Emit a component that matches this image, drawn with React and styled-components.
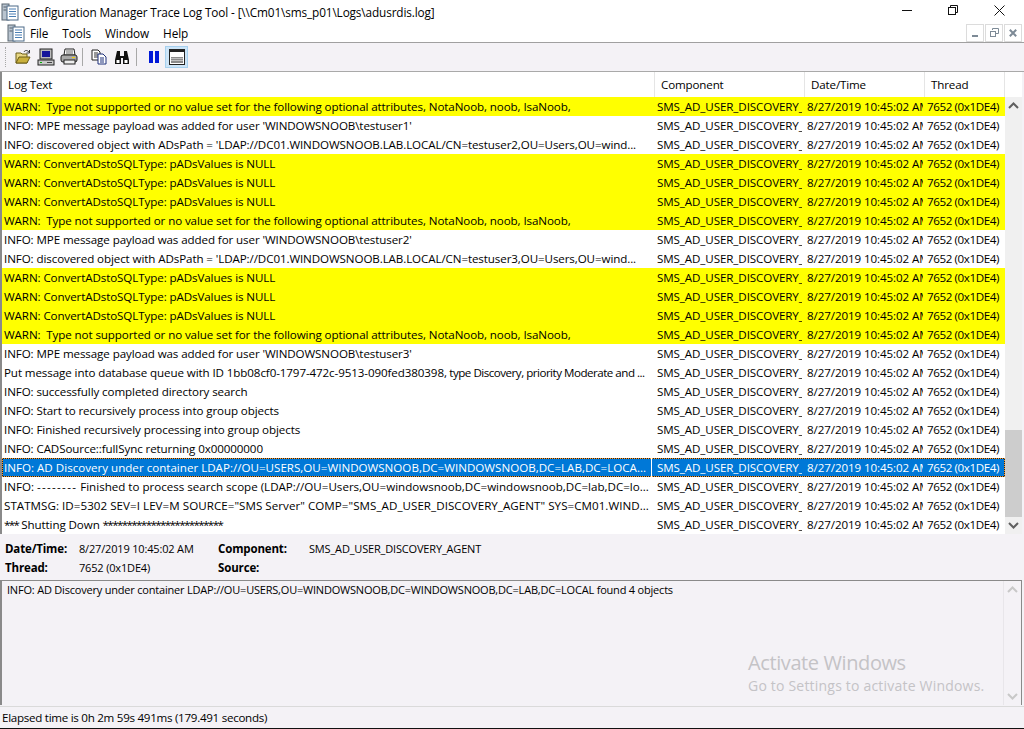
import React from "react";
import styled, { createGlobalStyle } from "styled-components";

const GlobalStyle = createGlobalStyle`
	html, body {
		margin: 0;
		padding: 0;
		background: #f4f2f6;
	}
	body {
		font-family: "Open Sans", "Noto Sans", "Liberation Sans", sans-serif;
		font-size: 11.6px;
		color: #000;
	}
`;

const Window = styled.div`
	width: 1024px;
	height: 729px;
	display: flex;
	flex-direction: column;
	overflow: hidden;
	background: #f4f2f6;
	border-bottom: 1px solid #111;
	box-sizing: border-box;
`;

const TitleBar = styled.div`
	height: 23px;
	display: flex;
	align-items: center;
	padding: 0 2px 0 1px;
	background: #fff;
	flex: none;
`;

const Title = styled.div`
	flex: 1;
	margin-left: 4px;
	font-size: 11.8px;
	letter-spacing: -0.13px;
	white-space: nowrap;
`;

const Caption = styled.div`
	width: 46px;
	height: 20px;
	align-self: flex-start;
	display: flex;
	align-items: center;
	justify-content: center;
`;

const MenuBar = styled.div`
	height: 19px;
	display: flex;
	align-items: center;
	padding-left: 7px;
	background: #fff;
	flex: none;
`;

const MenuItem = styled.span`
	margin-left: ${(p) => p.$gap}px;
	font-size: 11.8px;
	letter-spacing: -0.1px;
`;

const MdiButtons = styled.div`
	margin-left: auto;
	margin-right: 2px;
	display: flex;
	gap: 1px;
`;

const MdiButton = styled.div`
	width: 16px;
	height: 16px;
	border: 1px solid #dcdcdc;
	display: flex;
	align-items: center;
	justify-content: center;
`;

const ToolBar = styled.div`
	height: 28px;
	display: flex;
	align-items: center;
	padding-left: 5px;
	background: #f4f2f6;
	border-top: 1px solid #a0a0a0;
	border-bottom: 1px solid #a9a9a9;
	flex: none;
`;

const Grip = styled.div`
	width: 1px;
	height: 20px;
	margin-right: 4px;
	border-left: 1px dotted #a8a8a8;
`;

const ToolButton = styled.div`
	width: 23px;
	height: 22px;
	display: flex;
	align-items: center;
	justify-content: center;
	box-sizing: border-box;
	background: ${(p) => (p.$active ? "#cce4f7" : "transparent")};
	border: 1px solid ${(p) => (p.$active ? "#a6d0ee" : "transparent")};
`;

const ToolSep = styled.div`
	width: 1px;
	height: 18px;
	margin: 0 ${(p) => p.$after}px 0 ${(p) => p.$before}px;
	background: #a8a8a8;
`;

const ListArea = styled.div`
	height: 462px;
	display: flex;
	flex-direction: column;
	margin-right: 2px;
	border-left: 2px solid #8a8a8a;
	flex: none;
	background: #fff;
`;

const HeaderRow = styled.div`
	height: 25px;
	display: grid;
	grid-template-columns: 653px 150px 120px 80px 1fr;
	background: #fff;
	flex: none;
`;

const HeaderCell = styled.div`
	display: flex;
	align-items: center;
	padding-left: 6px;
	border-right: 1px solid #e5e5e5;
	letter-spacing: -0.15px;
	white-space: nowrap;
`;

const ListBody = styled.div`
	flex: 1;
	display: flex;
	min-height: 0;
`;

const Rows = styled.div`
	width: 1003px;
	display: flex;
	flex-direction: column;
`;

const Row = styled.div`
	height: 19px;
	display: grid;
	grid-template-columns: 653px 150px 120px 80px;
	align-items: center;
	box-sizing: border-box;
	background: ${(p) =>
		p.$kind === "warn" ? "#ffff00" : p.$kind === "selected" ? "#0078d7" : "#fff"};
	color: ${(p) => (p.$kind === "selected" ? "#fff" : "#000")};
	outline: ${(p) => (p.$kind === "selected" ? "1px dotted #ff9a1f" : "none")};
	outline-offset: -1px;
	box-shadow: ${(p) => (p.$kind === "selected" ? "inset 0 0 0 1px #10233a" : "none")};
`;

const Cell = styled.div`
	padding-left: 2px;
	margin-right: ${(p) => p.$clip}px;
	overflow: hidden;
	white-space: pre;
	letter-spacing: ${(p) => p.$spacing || -0.1}px;
	line-height: 19px;
	height: 19px;
	box-sizing: border-box;
	border-right: ${(p) => (p.$divider ? "1px solid #fff" : "none")};
`;

const Dashes = styled.span`
	letter-spacing: 1.3px;
`;

const Stars = styled.span`
	letter-spacing: -1.6px;
`;

const Squeezed = styled.span`
	letter-spacing: -0.5px;
`;

const Scrollbar = styled.div`
	width: 17px;
	display: flex;
	flex-direction: column;
	background: #f0f0f0;
`;

const ScrollArrow = styled.div`
	height: 17px;
	display: flex;
	align-items: center;
	justify-content: center;
	flex: none;
`;

const ScrollTrack = styled.div`
	flex: 1;
	display: flex;
	flex-direction: column;
	padding-top: ${(p) => p.$top}px;
`;

const ScrollThumb = styled.div`
	height: 87px;
	background: #cdcdcd;
`;

const Details = styled.div`
	height: 46px;
	flex: none;
	display: grid;
	grid-template-columns: 74px 139px 91px 1fr;
	grid-template-rows: 19px 19px;
	align-content: center;
	align-items: center;
	padding: 2px 0 0 5px;
	box-sizing: border-box;
	background: #f4f2f6;
`;

const DetailLabel = styled.div`
	font-weight: 700;
	font-size: 11.5px;
	letter-spacing: -0.15px;
`;

const DetailValue = styled.div`
	font-size: 11px;
	letter-spacing: -0.17px;
	white-space: nowrap;
`;

const MessagePane = styled.div`
	height: 125px;
	flex: none;
	display: flex;
	justify-content: space-between;
	margin-right: 2px;
	border-left: 2px solid #8a8a8a;
	border-top: 1px solid #8a8a8a;
	border-right: 1px solid #8a8a8a;
	box-sizing: border-box;
`;

const MessageText = styled.div`
	padding: 1px 0 0 5px;
	font-size: 11px;
	letter-spacing: -0.2px;
`;

const ActivateMark = styled.div`
	position: absolute;
	left: 748px;
	top: 650px;
	color: #c4c3c6;
	pointer-events: none;
`;

const ActivateTitle = styled.div`
	font-size: 20px;
	line-height: 26px;
	letter-spacing: -0.4px;
`;

const ActivateHint = styled.div`
	font-size: 14px;
	line-height: 19px;
	letter-spacing: 0.2px;
`;

const PaneScroll = styled.div`
	width: 17px;
	display: flex;
	flex-direction: column;
	justify-content: space-between;
	border-left: 1px solid #e8e6ea;
`;

const StatusBar = styled.div`
	flex: 1;
	display: flex;
	align-items: center;
	padding-left: 2px;
	margin-top: 1px;
	border-top: 1px solid #dadada;
	letter-spacing: -0.28px;
`;

const Chevron = ({ up, color = "#606060" }) => (
	<svg width="11" height="7" viewBox="0 0 11 7">
		<path
			d={up ? "M1 6 L5.5 1.5 L10 6" : "M1 1 L5.5 5.5 L10 1"}
			fill="none"
			stroke={color}
			strokeWidth="2"
		/>
	</svg>
);

const AppIcon = () => (
	<svg width="18" height="18" viewBox="0 0 18 18">
		<rect x="1" y="1" width="7" height="16" fill="#b9c4cf" stroke="#5a6672" />
		<rect x="6" y="3" width="11" height="14" fill="#fff" stroke="#4d6a88" />
		<path d="M8 6h7M8 8.5h7M8 11h7M8 13.5h7" stroke="#4a7fb5" />
		<path d="M2.5 4h3M2.5 7h3" stroke="#56616c" />
	</svg>
);

const OpenIcon = () => (
	<svg width="16" height="16" viewBox="0 0 16 16">
		<path d="M1 4h5l1 1h5v9H1z" fill="#e8d785" stroke="#6b5c17" />
		<path d="M1 14l3-6h11l-3 6z" fill="#c9b03d" stroke="#6b5c17" />
		<path d="M9 3c1-2 3-2 5 0" fill="none" stroke="#333" />
		<path d="M14.5 1v3h-3" fill="none" stroke="#333" />
	</svg>
);

const ComputerIcon = () => (
	<svg width="18" height="18" viewBox="0 0 18 18">
		<rect x="3" y="1" width="12" height="10" fill="#bbb" stroke="#222" />
		<rect x="5" y="3" width="8" height="6" fill="#16169a" />
		<rect x="1" y="12" width="16" height="5" fill="#c8c8c8" stroke="#222" />
		<rect x="3" y="14" width="2" height="1" fill="#00b000" />
		<path d="M10 14.5h5" stroke="#444" />
	</svg>
);

const PrintIcon = () => (
	<svg width="18" height="18" viewBox="0 0 18 18">
		<path d="M5 1h9l1 6H4z" fill="#fff" stroke="#222" />
		<path d="M6 3h7M6 5h7" stroke="#666" />
		<rect x="1" y="7" width="16" height="7" rx="2" fill="#a9a9a9" stroke="#222" />
		<rect x="4" y="12" width="11" height="4" fill="#eee" stroke="#222" />
		<rect x="12" y="9" width="3" height="1" fill="#f0d000" />
	</svg>
);

const CopyIcon = () => (
	<svg width="16" height="16" viewBox="0 0 16 16">
		<path d="M1 1h6l2 2v8H1z" fill="#fff" stroke="#222" />
		<path d="M3 4h4M3 6h4M3 8h4" stroke="#333" />
		<path d="M7 5h5l3 3v7H7z" fill="#fff" stroke="#1c2f7a" />
		<path d="M9 9h4M9 11h4M9 13h4" stroke="#1c2f7a" />
	</svg>
);

const FindIcon = () => (
	<svg width="16" height="16" viewBox="0 0 16 16">
		<path d="M3 2h3v5h4V2h3l2 9v4H9V9H7v6H1v-4z" fill="#111" />
		<rect x="2.5" y="11" width="3" height="3" fill="#fff" />
		<rect x="10.5" y="11" width="3" height="3" fill="#fff" />
	</svg>
);

const PauseIcon = () => (
	<svg width="12" height="14" viewBox="0 0 12 14">
		<rect x="1" y="1" width="4" height="12" fill="#0018d8" />
		<rect x="7" y="1" width="4" height="12" fill="#0018d8" />
	</svg>
);

const PaneIcon = () => (
	<svg width="16" height="16" viewBox="0 0 16 16">
		<rect x="0.5" y="0.5" width="15" height="15" fill="#fff" stroke="#222" />
		<rect x="1" y="1" width="14" height="2" fill="#222" />
		<rect x="2" y="8" width="12" height="6" fill="#8b8b8b" />
		<path d="M2 9.5h12M2 11.5h12" stroke="#c0c0c0" />
	</svg>
);

const warnType = "WARN:  Type not supported or no value set for the following optional attributes, NotaNoob, noob, IsaNoob,";
const warnNull = "WARN: ConvertADstoSQLType: pADsValues is NULL";

const rows = [
	{ text: warnType, kind: "warn" },
	{ text: "INFO: MPE message payload was added for user 'WINDOWSNOOB\\testuser1'" },
	{ text: "INFO: discovered object with ADsPath = 'LDAP://DC01.WINDOWSNOOB.LAB.LOCAL/CN=testuser2,OU=Users,OU=wind..." },
	{ text: warnNull, kind: "warn" },
	{ text: warnNull, kind: "warn" },
	{ text: warnNull, kind: "warn" },
	{ text: warnType, kind: "warn" },
	{ text: "INFO: MPE message payload was added for user 'WINDOWSNOOB\\testuser2'" },
	{ text: "INFO: discovered object with ADsPath = 'LDAP://DC01.WINDOWSNOOB.LAB.LOCAL/CN=testuser3,OU=Users,OU=wind..." },
	{ text: warnNull, kind: "warn" },
	{ text: warnNull, kind: "warn" },
	{ text: warnNull, kind: "warn" },
	{ text: warnType, kind: "warn" },
	{ text: "INFO: MPE message payload was added for user 'WINDOWSNOOB\\testuser3'" },
	{
		text: (
			<>
				Put message into database queue with ID 1bb08cf0-1797-472c-9513-090fed380398,
				<Squeezed> type Discovery, priority Moderate and ...</Squeezed>
			</>
		),
	},
	{ text: "INFO: successfully completed directory search" },
	{ text: "INFO: Start to recursively process into group objects" },
	{ text: "INFO: Finished recursively processing into group objects" },
	{ text: "INFO: CADSource::fullSync returning 0x00000000" },
	{ text: "INFO: AD Discovery under container LDAP://OU=USERS,OU=WINDOWSNOOB,DC=WINDOWSNOOB,DC=LAB,DC=LOCA...", kind: "selected", spacing: 0.001 },
	{
		text: (
			<>
				INFO: <Dashes>--------</Dashes> Finished to process search scope (LDAP://OU=Users,OU=windowsnoob,DC=windowsnoob,DC=lab,DC=lo...
			</>
		),
		spacing: -0.01,
	},
	{ text: "STATMSG: ID=5302 SEV=I LEV=M SOURCE=\"SMS Server\" COMP=\"SMS_AD_USER_DISCOVERY_AGENT\" SYS=CM01.WIND...", spacing: 0.04 },
	{
		text: (
			<>
				<Stars>***</Stars> Shutting Down <Stars>*************************</Stars>
			</>
		),
	},
];

const App = () => (
	<>
		<GlobalStyle />
		<Window>
			<TitleBar>
				<AppIcon />
				<Title>Configuration Manager Trace Log Tool - [\\Cm01\sms_p01\Logs\adusrdis.log]</Title>
				<Caption>
					<svg width="10" height="10" viewBox="0 0 10 10">
						<path d="M0 5.5h10" stroke="#111" />
					</svg>
				</Caption>
				<Caption>
					<svg width="10" height="10" viewBox="0 0 10 10">
						<rect x="0.5" y="2.5" width="7" height="7" fill="none" stroke="#111" />
						<path d="M2.5 2.5V0.5h7v7H7.5" fill="none" stroke="#111" />
					</svg>
				</Caption>
				<Caption>
					<svg width="11" height="11" viewBox="0 0 11 11">
						<path d="M0.5 0.5l10 10M10.5 0.5l-10 10" stroke="#111" />
					</svg>
				</Caption>
			</TitleBar>
			<MenuBar>
				<AppIcon />
				<MenuItem $gap={5}>File</MenuItem>
				<MenuItem $gap={14}>Tools</MenuItem>
				<MenuItem $gap={14}>Window</MenuItem>
				<MenuItem $gap={14}>Help</MenuItem>
				<MdiButtons>
					<MdiButton>
						<svg width="8" height="8" viewBox="0 0 8 8">
							<rect x="1" y="6" width="6" height="2" fill="#7d8a96" />
						</svg>
					</MdiButton>
					<MdiButton>
						<svg width="9" height="9" viewBox="0 0 9 9">
							<rect x="0.5" y="3.5" width="5" height="5" fill="none" stroke="#7d8a96" />
							<path d="M2.5 2V0.5h6v5H6" fill="none" stroke="#7d8a96" />
						</svg>
					</MdiButton>
					<MdiButton>
						<svg width="8" height="8" viewBox="0 0 8 8">
							<path d="M0.8 0.8l6.4 6.4M7.2 0.8l-6.4 6.4" stroke="#7d8a96" strokeWidth="2" />
						</svg>
					</MdiButton>
				</MdiButtons>
			</MenuBar>
			<ToolBar>
				<Grip />
				<ToolButton><OpenIcon /></ToolButton>
				<ToolButton><ComputerIcon /></ToolButton>
				<ToolButton><PrintIcon /></ToolButton>
				<ToolSep $before={2} $after={4} />
				<ToolButton><CopyIcon /></ToolButton>
				<ToolButton><FindIcon /></ToolButton>
				<ToolSep $before={3} $after={5} />
				<ToolButton><PauseIcon /></ToolButton>
				<ToolButton $active><PaneIcon /></ToolButton>
			</ToolBar>
			<ListArea>
				<HeaderRow>
					<HeaderCell>Log Text</HeaderCell>
					<HeaderCell>Component</HeaderCell>
					<HeaderCell>Date/Time</HeaderCell>
					<HeaderCell>Thread</HeaderCell>
				</HeaderRow>
				<ListBody>
					<Rows>
						{rows.map((row, index) => (
							<Row key={index} $kind={row.kind}>
								<Cell $clip={3} $spacing={row.spacing} $divider={row.kind === "selected"}>{row.text}</Cell>
								<Cell $clip={3}>SMS_AD_USER_DISCOVERY_AGENT</Cell>
								<Cell $clip={2}>8/27/2019 10:45:02 AM</Cell>
								<Cell $clip={0} $spacing={-0.4}>7652 (0x1DE4)</Cell>
							</Row>
						))}
					</Rows>
					<Scrollbar>
						<ScrollArrow><Chevron up /></ScrollArrow>
						<ScrollTrack $top={316}><ScrollThumb /></ScrollTrack>
						<ScrollArrow><Chevron /></ScrollArrow>
					</Scrollbar>
				</ListBody>
			</ListArea>
			<Details>
				<DetailLabel>Date/Time:</DetailLabel>
				<DetailValue>8/27/2019 10:45:02 AM</DetailValue>
				<DetailLabel>Component:</DetailLabel>
				<DetailValue>SMS_AD_USER_DISCOVERY_AGENT</DetailValue>
				<DetailLabel>Thread:</DetailLabel>
				<DetailValue>7652 (0x1DE4)</DetailValue>
				<DetailLabel>Source:</DetailLabel>
				<DetailValue />
			</Details>
			<MessagePane>
				<MessageText>INFO: AD Discovery under container LDAP://OU=USERS,OU=WINDOWSNOOB,DC=WINDOWSNOOB,DC=LAB,DC=LOCAL found 4 objects</MessageText>
				<PaneScroll>
					<ScrollArrow><Chevron up color="#c8c8c8" /></ScrollArrow>
					<ScrollArrow><Chevron color="#c8c8c8" /></ScrollArrow>
				</PaneScroll>
			</MessagePane>
			<StatusBar>Elapsed time is 0h 2m 59s 491ms (179.491 seconds)</StatusBar>
		</Window>
		<ActivateMark>
			<ActivateTitle>Activate Windows</ActivateTitle>
			<ActivateHint>Go to Settings to activate Windows.</ActivateHint>
		</ActivateMark>
	</>
);

export default App;
